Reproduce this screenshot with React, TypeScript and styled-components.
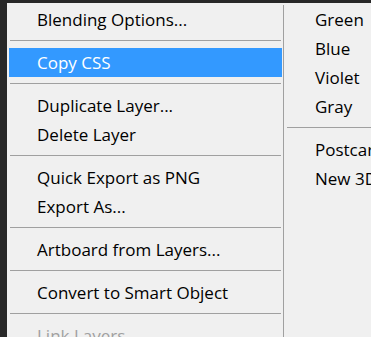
import React from "react";
import styled, { createGlobalStyle } from "styled-components";

const GlobalStyle = createGlobalStyle`
  html, body, #root {
    margin: 0;
    padding: 0;
    height: 100%;
  }
  body {
    background: #282828;
    overflow: hidden;
    font-family: "Open Sans", "Noto Sans", "Liberation Sans", sans-serif;
    -webkit-font-smoothing: antialiased;
  }
`;

const Screen = styled.div`
  display: flex;
  height: 100%;
  box-sizing: border-box;
  padding: 3px 0 0 7px;
  background: #282828;
  overflow: hidden;
`;

const MenuSurface = styled.div`
  flex: 1;
  display: flex;
  background: #f0f0f0;
  overflow: hidden;
`;

const Column = styled.div<{ $side: "left" | "right" }>`
  display: flex;
  flex-direction: column;
  box-sizing: border-box;
  flex: ${(p) => (p.$side === "left" ? "0 0 276px" : "1 0 auto")};
  padding: ${(p) => (p.$side === "left" ? "2px 1px 0 2px" : "2px 0 0 3px")};
`;

const Divider = styled.div`
  flex: 0 0 1px;
  margin-top: 2px;
  background: #a0a0a0;
`;

const Item = styled.div<{ $active?: boolean; $disabled?: boolean; $indent: number }>`
  flex: 0 0 29px;
  height: 29px;
  line-height: 29px;
  padding-left: ${(p) => p.$indent}px;
  font-size: 17px;
  white-space: nowrap;
  color: ${(p) => (p.$active ? "#ffffff" : p.$disabled ? "#a0a0a0" : "#000000")};
  background: ${(p) => (p.$active ? "#3399ff" : "transparent")};
`;

const Separator = styled.div<{ $inset: number }>`
  flex: 0 0 1px;
  height: 1px;
  margin: 6px ${(p) => p.$inset}px 7px;
  background: #a0a0a0;
`;

type Entry = { label?: string; active?: boolean; disabled?: boolean; sep?: boolean };

const leftEntries: Entry[] = [
  { label: "Blending Options..." },
  { sep: true },
  { label: "Copy CSS", active: true },
  { sep: true },
  { label: "Duplicate Layer..." },
  { label: "Delete Layer" },
  { sep: true },
  { label: "Quick Export as PNG" },
  { label: "Export As..." },
  { sep: true },
  { label: "Artboard from Layers..." },
  { sep: true },
  { label: "Convert to Smart Object" },
  { sep: true },
  { label: "Link Layers", disabled: true },
];

const rightEntries: Entry[] = [
  { label: "Green" },
  { label: "Blue" },
  { label: "Violet" },
  { label: "Gray" },
  { sep: true },
  { label: "Postcard" },
  { label: "New 3D Extrusion from Selected Layer" },
];

const renderEntries = (entries: Entry[], indent: number, inset: number) =>
  entries.map((e, i) =>
    e.sep ? (
      <Separator key={i} $inset={inset} />
    ) : (
      <Item key={i} $indent={indent} $active={e.active} $disabled={e.disabled}>
        {e.label}
      </Item>
    )
  );

export default function App() {
  return (
    <>
      <GlobalStyle />
      <Screen>
        <MenuSurface>
          <Column $side="left">{renderEntries(leftEntries, 28, 1)}</Column>
          <Divider />
          <Column $side="right">{renderEntries(rightEntries, 28, 0)}</Column>
        </MenuSurface>
      </Screen>
    </>
  );
}
